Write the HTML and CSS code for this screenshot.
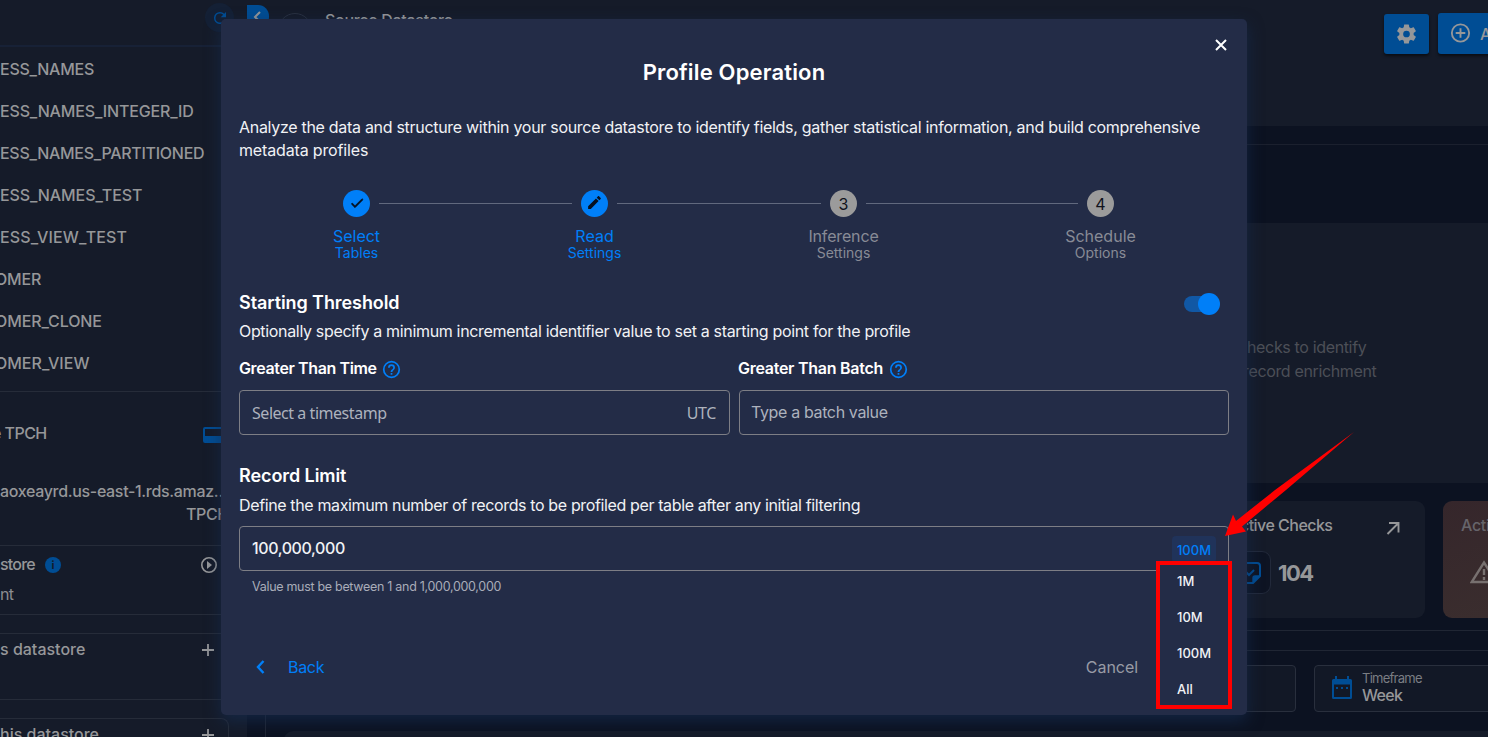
FILE: index.html
```html
<!DOCTYPE html>
<html lang="en">
<head>
<meta charset="utf-8">
<title>Profile Operation</title>
<link rel="stylesheet" href="styles.css">
</head>
<body>
<div class="app">
  <aside class="sidebar">
    <div class="side-head"><span class="refresh"><svg width="18" height="18" viewBox="0 0 24 24"><path fill="currentColor" d="M17.65 6.35A7.96 7.96 0 0 0 12 4a8 8 0 1 0 7.73 10h-2.08A6 6 0 1 1 12 6c1.66 0 3.14.69 4.22 1.78L13 11h7V4z"/></svg></span></div>
    <ul class="tables">
      <li class="t1">ESS_NAMES</li>
      <li class="t2">ESS_NAMES_INTEGER_ID</li>
      <li class="t3">ESS_NAMES_PARTITIONED</li>
      <li class="t4">ESS_NAMES_TEST</li>
      <li class="t5">ESS_VIEW_TEST</li>
      <li class="t6 cut">OMER</li>
      <li class="t7 cut">OMER_CLONE</li>
      <li class="t8 cut">OMER_VIEW</li>
    </ul>
    <section class="conn">
      <div class="conn-name"><span>e TPCH</span><svg class="db" width="20" height="16" viewBox="0 0 20 16"><rect x="1" y="1" width="18" height="14" rx="1" fill="none" stroke="currentColor" stroke-width="2"/><path fill="currentColor" d="M1 9h18v6H1z"/></svg></div>
      <div class="conn-host">aoxeayrd.us-east-1.rds.amaz…</div>
      <div class="conn-db">TPCH</div>
    </section>
    <section class="enrich">
      <div class="row"><span class="store">store</span><span class="info">i</span>
        <svg class="end" width="18" height="18" viewBox="0 0 18 18"><circle cx="9" cy="9" r="7.2" fill="none" stroke="currentColor" stroke-width="1.6"/><path fill="currentColor" d="M7 5l5 4-5 4z"/></svg></div>
      <div class="ent">nt</div>
    </section>
    <section class="block"><span class="ds1">s datastore</span><svg width="14" height="14" viewBox="0 0 14 14"><path stroke="currentColor" stroke-width="1.8" d="M7 1v12M1 7h12"/></svg></section>
    <section class="block last"><span class="ds2">his datastore</span><svg width="14" height="14" viewBox="0 0 14 14"><path stroke="currentColor" stroke-width="1.8" d="M7 1v12M1 7h12"/></svg></section>
  </aside>
  <main class="main">
    <header class="top">
      <span class="collapse"><svg width="8" height="12" viewBox="0 0 8 12"><path d="M7 1L2 6l5 5" fill="none" stroke="currentColor" stroke-width="2"/></svg></span>
      <span class="ring"></span>
      <span class="crumb">Source Datastore</span>
      <span class="btn gear"><svg width="24" height="24" viewBox="0 0 24 24"><path fill="currentColor" d="M12 15.5A3.5 3.5 0 0 1 8.5 12 3.5 3.5 0 0 1 12 8.5a3.5 3.5 0 0 1 3.5 3.5 3.5 3.5 0 0 1-3.5 3.5m7.43-2.53c.04-.32.07-.64.07-.97s-.03-.66-.07-1l2.11-1.63c.19-.15.24-.42.12-.64l-2-3.46c-.12-.22-.39-.31-.61-.22l-2.49 1c-.52-.39-1.06-.73-1.69-.98l-.37-2.65A.506.506 0 0 0 14 2h-4c-.25 0-.46.18-.5.42l-.37 2.65c-.63.25-1.17.59-1.69.98l-2.49-1c-.22-.09-.49 0-.61.22l-2 3.46c-.13.22-.07.49.12.64L4.57 11c-.04.34-.07.67-.07 1s.03.65.07.97l-2.11 1.66c-.19.15-.25.42-.12.64l2 3.46c.12.22.39.3.61.22l2.49-1.01c.52.4 1.06.74 1.69.99l.37 2.65c.04.24.25.42.5.42h4c.25 0 .46-.18.5-.42l.37-2.65c.63-.26 1.17-.59 1.69-.99l2.49 1.01c.22.08.49 0 .61-.22l2-3.46c.12-.22.07-.49-.12-.64z"/></svg></span>
      <span class="btn add"><svg width="24" height="24" viewBox="0 0 24 24"><path fill="currentColor" d="M12 20c-4.41 0-8-3.59-8-8s3.59-8 8-8 8 3.59 8 8-3.59 8-8 8m0-18A10 10 0 1 0 22 12 10 10 0 0 0 12 2m1 5h-2v4H7v2h4v4h2v-4h4v-2h-4z"/></svg><span>Add</span></span>
    </header>
    <div class="band"></div>
    <div class="hint"><p class="h1">hecks to identify</p><p class="h2">record enrichment</p></div>
    <div class="cards">
      <div class="card">
        <div class="card-head"><span class="cname">ctive Checks</span><svg width="14" height="14" viewBox="0 0 14 14"><path d="M1.500 13L12 2.500M3 2h9.500v9.500" fill="none" stroke="currentColor" stroke-width="1.9"/></svg></div>
        <div class="card-body"><span class="tile"><svg width="24" height="24" viewBox="0 0 24 24" fill="none" stroke="currentColor" stroke-width="2"><path d="M15 22H4a2 2 0 0 1-2-2V4a2 2 0 0 1 2-2h15a3 3 0 0 1 3 3v10z"/><path d="M15 21v-4a2 2 0 0 1 2-2h4z" fill="currentColor" stroke-width="1.4"/><path d="M8 11l3 3 5-5"/></svg></span><b>104</b></div>
      </div>
      <div class="card warn">
        <span class="aname">Active</span>
        <svg width="28" height="24" viewBox="0 0 28 24"><path d="M14 2.5L26.3 22H1.7z" fill="none" stroke="currentColor" stroke-width="2.4"/><path d="M14 9v6M14 17v3" stroke="currentColor" stroke-width="2.4"/></svg>
      </div>
    </div>
    <div class="rules"></div>
    <div class="filters">
      <div class="select wide"></div>
      <div class="select time"><svg width="20" height="24" viewBox="0 0 20 24"><path fill="currentColor" fill-rule="evenodd" d="M3 0h2v3h10V0h2v3h1.500a1.500 1.500 0 0 1 1.500 1.500v17a1.500 1.500 0 0 1-1.500 1.500h-17A1.500 1.500 0 0 1 0 21.500v-17A1.500 1.500 0 0 1 1.500 3H3zM2 8.500V21h16V8.500zM4 11h2v2H4zm5 0h2v2H9zm5 0h2v2h-2z"/></svg><div><div class="tl">Timeframe</div><div class="tv">Week</div></div></div>
    </div>
    <div class="bottom"><div class="bottom-panel"></div></div>
  </main>
</div>

<div class="dialog">
  <svg class="close" width="12" height="12" viewBox="0 0 12 12"><path d="M1 1l10 10M11 1L1 11" stroke="#fff" stroke-width="2"/></svg>
  <h1 class="title"><span>Profile Operation</span></h1>
  <p class="lead"><span class="l1">Analyze the data and structure within your source datastore to identify fields, gather statistical information, and build comprehensive</span><br><span class="l2">metadata profiles</span></p>
  <div class="steps">
    <div class="step on"><span class="dot"><svg width="16" height="16" viewBox="0 0 24 24"><path fill="#06101f" stroke="#06101f" d="M21 7L9 19l-5.500-5.500 1.410-1.410L9 16.170 19.590 5.590z"/></svg></span><span class="s1 a1">Select</span><span class="s2 b1">Tables</span></div>
    <i class="line w1"></i>
    <div class="step on"><span class="dot"><svg width="17" height="17" viewBox="0 0 24 24"><path fill="#06101f" d="M20.710 7.040c.39-.39.39-1.040 0-1.410l-2.340-2.340c-.37-.39-1.020-.39-1.410 0l-1.840 1.830 3.750 3.750M3 17.250V21h3.750L17.810 9.930l-3.750-3.750z"/></svg></span><span class="s1 a2">Read</span><span class="s2 b2">Settings</span></div>
    <i class="line w2"></i>
    <div class="step"><span class="dot">3</span><span class="s1 a3">Inference</span><span class="s2 b2">Settings</span></div>
    <i class="line w3"></i>
    <div class="step"><span class="dot">4</span><span class="s1 a4">Schedule</span><span class="s2 b4">Options</span></div>
  </div>
  <div class="sect"><h2 class="st">Starting Threshold</h2><span class="toggle"><i></i></span></div>
  <p class="desc d1">Optionally specify a minimum incremental identifier value to set a starting point for the profile</p>
  <div class="fields">
    <div class="field"><div class="label"><span class="g1">Greater Than Time</span><svg width="19" height="19" viewBox="1 1 22 22"><path fill="#007ff8" d="M11 18h2v-2h-2zm1-16A10 10 0 1 0 22 12 10 10 0 0 0 12 2m0 18a8 8 0 1 1 8-8 8 8 0 0 1-8 8m0-14a4 4 0 0 0-4 4h2a2 2 0 1 1 4 0c0 2-3 1.750-3 5h2c0-2.250 3-2.500 3-5a4 4 0 0 0-4-4"/></svg></div>
      <div class="input ts"><span class="p1">Select a timestamp</span><span class="p2">UTC</span></div></div>
    <div class="field"><div class="label"><span class="g2">Greater Than Batch</span><svg width="19" height="19" viewBox="1 1 22 22"><path fill="#007ff8" d="M11 18h2v-2h-2zm1-16A10 10 0 1 0 22 12 10 10 0 0 0 12 2m0 18a8 8 0 1 1 8-8 8 8 0 0 1-8 8m0-14a4 4 0 0 0-4 4h2a2 2 0 1 1 4 0c0 2-3 1.750-3 5h2c0-2.250 3-2.500 3-5a4 4 0 0 0-4-4"/></svg></div>
      <div class="input"><span class="p3">Type a batch value</span></div></div>
  </div>
  <h2 class="rl"><span>Record Limit</span></h2>
  <p class="desc d2">Define the maximum number of records to be profiled per table after any initial filtering</p>
  <div class="input limit"><span class="num">100,000,000</span><span class="chip">100M</span></div>
  <p class="help">Value must be between 1 and 1,000,000,000</p>
  <div class="foot"><svg width="9" height="14" viewBox="0 0 9 14"><path d="M7.500 1L2 7l5.500 6" fill="none" stroke="#007ff8" stroke-width="2.400"/></svg><span class="back">Back</span><span class="cancel">Cancel</span></div>
</div>
<div class="menu"><span class="m1">1M</span><span class="m2">10M</span><span class="m3">100M</span><span class="m4">All</span></div>
<svg class="arrow" width="140" height="112" viewBox="1220 428 140 112"><path fill="#f00" d="M1354 432L1275 490L1236 521L1233 514.500L1225 536L1246 531.500L1242 526.500L1286 490z"/></svg>
</body>
</html>
```

FILE: styles.css
```css
* { box-sizing: border-box; }
body { margin: 0; width: 1488px; height: 737px; overflow: hidden; position: relative; background: #0c1221; font-family: Inter, "Liberation Sans", sans-serif; font-size: 16px; color: #969799; }
h1, h2, p, ul { margin: 0; padding: 0; }
span, p, li, h1, h2 { white-space: nowrap; }
svg { flex: none; display: block; }
.app { display: flex; height: 737px; overflow: hidden; }

.sidebar { width: 247px; flex: none; background: #151b29; overflow: hidden; }
.side-head { height: 47px; border-bottom: 2px solid #172136; padding: 3px 0 0 205px; }
.refresh { display: flex; width: 29px; height: 29px; border-radius: 50%; background: #142035; color: #004d94; align-items: center; justify-content: center; }
.tables { list-style: none; padding: 1px 0 7px; height: 344px; }
.tables li { height: 42px; line-height: 42px; font-weight: 500; }
.t1 { letter-spacing: -.26px; } .t2 { letter-spacing: -.15px; } .t3 { letter-spacing: -.28px; } .t4 { letter-spacing: -.1px; } .t5 { letter-spacing: .15px; }
.t6 { letter-spacing: -.2px; } .t7 { letter-spacing: -.12px; } .t8 { letter-spacing: 0; }
.cut { text-indent: -5px; }
.conn { height: 154px; border-top: 1px solid #262c39; padding-top: 28px; width: 221px; overflow: hidden; font-weight: 500; }
.conn-name { display: flex; height: 26px; align-items: center; justify-content: space-between; width: 223px; }
.conn-name span { margin-left: -8px; letter-spacing: -.55px; }
.db { color: #004d94; margin-top: 4px; }
.conn-host { margin-top: 34px; height: 23px; line-height: 23px; white-space: nowrap; letter-spacing: -.33px; }
.conn-db { height: 23px; line-height: 23px; padding-left: 186px; letter-spacing: -.4px; }
.enrich { height: 70px; border: solid #262c39; border-width: 1px 0; padding-top: 6px; font-weight: 500; }
.row { display: flex; align-items: center; height: 26px; }
.store { margin-top: -2px; width: 35px; letter-spacing: -.8px; }
.info { display: grid; place-items: center; width: 16px; height: 16px; border-radius: 50%; background: #004d94; color: #151b29; font-size: 11px; font-weight: 700; margin-left: 10px; }
.end { margin-left: 139px; }
.ent { height: 30px; line-height: 33px; font-weight: 400; color: #8b8d91; letter-spacing: -.8px; }
.block { height: 67px; margin-top: 18px; border: solid #262c39; border-width: 1px 0; display: flex; align-items: flex-start; justify-content: space-between; width: 247px; padding: 5px 32px 0 0; font-weight: 500; line-height: 20px; }
.block svg { margin-top: 4px; }
.block.last { width: 229px; border-width: 1px 1px 0 0; border-radius: 0 8px 0 0; padding-right: 13px; }

.main { width: 1241px; flex: none; }
.top { height: 126px; background: #151b29; display: flex; align-items: flex-start; }
.top > * { flex: none; }
.collapse { width: 22px; height: 23px; margin-top: 5px; border-radius: 0 11px 11px 0; background: #004d94; display: grid; place-items: center; }
.collapse svg { margin-right: 3px; }
.ring { width: 34px; height: 34px; border: 1px solid #283040; border-radius: 50%; margin: 13px 0 0 9px; }
.crumb { margin: 10px 0 0 13px; width: 300px; line-height: 20px; font-weight: 500; letter-spacing: -.3px; }
.btn { background: #004d94; border-radius: 3px; display: flex; align-items: center; box-shadow: 0 2px 3px #0008; }
.gear { width: 45px; height: 40px; justify-content: center; margin: 14px 9px 0 759px; }
.gear svg { width: 23px; margin-bottom: 1px; }
.add { width: 90px; height: 41px; margin-top: 13px; padding-left: 11px; gap: 8px; font-weight: 500; }
.add svg { margin-bottom: 2px; width: 23px; }
.band { height: 97px; border-top: 18px solid #0c1221; box-shadow: inset 0 1px #1b202e; }
.hint { height: 260px; background: #151b29; padding: 112px 0 0 1000px; color: #4c4f57; line-height: 24px; }
.h1 { letter-spacing: -.35px; }
.h2 { margin-left: -4px; letter-spacing: -.35px; }
.cards { display: flex; gap: 18px; padding: 18px 0 0; height: 148px; border-bottom: 1px solid #202634; overflow: hidden; }
.card { width: 1178px; height: 117px; border-radius: 9px; background: #151b29; flex: none; }
.card-head { display: flex; justify-content: space-between; align-items: center; margin: 14px 25px 0 993px; height: 20px; font-weight: 500; }
.cname { letter-spacing: -.53px; }
.card-head svg { margin-top: 6px; }
.card-body { display: flex; align-items: center; margin: 16px 0 0 981px; gap: 7px; }
.tile { width: 43px; height: 43px; border: 1px solid #22293a; background: #0e1423; border-radius: 9px; display: grid; place-items: center; color: #004d94; }
.card-body b { font-size: 22px; font-weight: 700; letter-spacing: -1.5px; }
.warn { background: linear-gradient(160deg, #35262b, #3c302f); width: 180px; padding: 14px 0 0 18px; color: #66646a; font-weight: 500; line-height: 20px; }
.aname { letter-spacing: -.3px; }
.warn svg { margin: 25px 0 0 9px; color: #77706f; }
.rules { height: 20px; border-bottom: 1px solid #202634; }
.filters { display: flex; gap: 18px; height: 61px; padding-top: 14px; }
.select { height: 47px; border: 1px solid #292f3d; border-radius: 4px; background: #121826; flex: none; }
.wide { width: 1049px; }
.time { width: 220px; display: flex; align-items: center; gap: 10px; padding: 0 0 1px 17px; }
.tl { font-size: 13px; line-height: 15px; color: #7a7d83; letter-spacing: -.75px; }
.time svg { color: #004d94; margin-top: -1px; }
.tv { line-height: 19px; font-weight: 500; letter-spacing: -.7px; }
.bottom { height: 26px; margin-left: 18px; border-left: 1px solid #202634; padding: 19px 0 0 18px; }
.bottom-panel { height: 20px; background: #151b29; border-radius: 9px 0 0 0; }

.dialog { position: absolute; left: 221px; top: 19px; width: 1026px; height: 696px; border-radius: 5px; background: #232c47; color: #f1f2f5; padding: 0 18px; box-shadow: 0 6px 16px 0 rgba(22, 44, 80, .7); }
.close { position: absolute; right: 20px; top: 20px; }
.title { font-size: 22px; font-weight: 600; text-align: center; padding-top: 39px; line-height: 28px; height: 97px; color: #fff; letter-spacing: .17px; }
.lead { line-height: 23px; height: 74px; }
.l1 { letter-spacing: -.297px; } .l2 { letter-spacing: -.15px; }
.steps { display: flex; align-items: flex-start; padding-left: 104px; gap: 9px; height: 98px; }
.step { width: 27px; display: flex; flex-direction: column; align-items: center; color: #888b96; }
.dot { width: 27px; height: 27px; border-radius: 50%; background: #9b9b9b; color: #10131c; display: grid; place-items: center; }
.on { color: #007ff8; }
.on .dot { background: #007ff8; }
.s1 { line-height: 20px; margin-top: 9px; }
.a3 { letter-spacing: -.15px; }
.s2 { font-size: 14px; line-height: 14px; }
.dot svg { margin-top: -2px; }
.line { height: 1px; background: #61697e; margin-top: 13px; }
.w1 { width: 193px; } .w2 { width: 204px; } .w3 { width: 212px; }
.sect { display: flex; justify-content: space-between; height: 33px; padding-top: 4px; }
.sect h2, .rl { font-size: 18px; font-weight: 600; line-height: 22px; color: #fff; letter-spacing: -.08px; }
.toggle { width: 33px; height: 16px; border-radius: 8px; background: #1158a5; margin: 4px 12px 0 0; display: flex; justify-content: flex-end; }
.toggle i { width: 22px; height: 22px; border-radius: 50%; background: #007ff8; margin: -3px -3px 0 0; flex: none; }
.desc { line-height: 20px; }
.d1 { letter-spacing: -.33px; } .d2 { letter-spacing: -.37px; }
.fields { display: flex; gap: 9px; padding-top: 16px; }
.field { width: 491px; }
.field + .field { width: 490px; }
.label { height: 33px; line-height: 22px; font-weight: 600; color: #fff; display: flex; gap: 6px; }
.g1 { letter-spacing: -.38px; margin-right: -1px; } .g2 { letter-spacing: -.27px; margin-left: -1px; }
.label svg { margin-top: 3px; }
.input { height: 45px; border: 1px solid #7d7e85; border-radius: 4px; display: flex; align-items: center; justify-content: space-between; padding: 0 12px 2px; color: #adb2bd; line-height: 20px; }
.ts { font-family: "Noto Sans", sans-serif; padding-top: 1px; padding-bottom: 0; }
.p1 { letter-spacing: -.46px; } .p2 { letter-spacing: -.4px; margin-right: 1px; }
.p3 { letter-spacing: -.36px; margin-left: -1px; }
.rl { margin-top: 30px; height: 30px; }
.limit { margin-top: 11px; color: #f1f2f5; }
.num { font-weight: 500; letter-spacing: -.4px; }
.chip { width: 44px; height: 27px; line-height: 28px; border-radius: 4px; background: #20335a; color: #007ff8; font-size: 13px; font-weight: 500; text-align: center; margin-top: 3px; }
.help { font-size: 12.500px; line-height: 16px; padding-left: 13px; margin-top: 8px; color: #a9adb9; letter-spacing: -.3px; }
.foot { display: flex; align-items: center; margin-top: 61px; height: 22px; padding-left: 17px; color: #989ba5; }
.back { color: #007ff8; margin-left: 23px; letter-spacing: -.3px; }
.cancel { margin-left: auto; padding-right: 91px; letter-spacing: -.05px; }
.menu { position: absolute; left: 1156px; top: 561px; width: 76px; height: 148px; border: 4px solid #f00; background: #232c47; padding-left: 17px; font-size: 13px; font-weight: 500; line-height: 32px; color: #f1f2f5; display: flex; flex-direction: column; gap: 4px; }
.menu span { height: 32px; flex: none; }
.arrow { position: absolute; left: 1220px; top: 428px; }
```
